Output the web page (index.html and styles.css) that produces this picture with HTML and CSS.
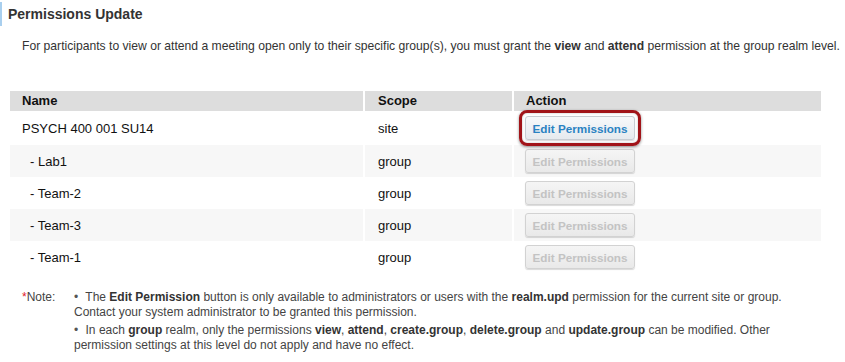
FILE: index.html
```html
<!DOCTYPE html>
<html>
<head>
<meta charset="utf-8">
<link rel="stylesheet" href="styles.css">
</head>
<body>
<div class="page">
  <h2 class="title">Permissions Update</h2>
  <p class="intro">For participants to view or attend a meeting open only to their specific group(s), you must grant the <b>view</b> and <b>attend</b> permission at the group realm level.</p>
  <table class="perm">
    <thead>
      <tr><th class="c-name">Name</th><th class="c-scope">Scope</th><th class="c-action">Action</th></tr>
    </thead>
    <tbody>
      <tr><td>PSYCH 400 001 SU14</td><td>site</td><td><span class="hl"><button class="btn active">Edit Permissions</button></span></td></tr>
      <tr class="alt"><td class="sub">- Lab1</td><td>group</td><td><button class="btn" disabled>Edit Permissions</button></td></tr>
      <tr><td class="sub">- Team-2</td><td>group</td><td><button class="btn" disabled>Edit Permissions</button></td></tr>
      <tr class="alt"><td class="sub">- Team-3</td><td>group</td><td><button class="btn" disabled>Edit Permissions</button></td></tr>
      <tr><td class="sub">- Team-1</td><td>group</td><td><button class="btn" disabled>Edit Permissions</button></td></tr>
    </tbody>
  </table>
  <div class="note">
    <div class="note-label"><span class="star">*</span>Note:</div>
    <ul class="note-list">
      <li><span class="bullet">•</span> The <b>Edit Permission</b> button is only available to administrators or users with the <b>realm.upd</b> permission for the current site or group. Contact your system administrator to be granted this permission.</li>
      <li><span class="bullet">•</span> In each <b>group</b> realm, only the permissions <b>view</b>, <b>attend</b>, <b>create.group</b>, <b>delete.group</b> and <b>update.group</b> can be modified. Other permission settings at this level do not apply and have no effect.</li>
    </ul>
  </div>
</div>
</body>
</html>
```
FILE: styles.css
```css
html, body {
  margin: 0;
  padding: 0;
  background: #fff;
}
body {
  font-family: "Liberation Sans", Arial, sans-serif;
  color: #333;
}
.page {
  width: 845px;
  height: 362px;
  overflow: hidden;
}
.title {
  margin: 2px 0 0 0;
  height: 24px;
  line-height: 24px;
  font-size: 14px;
  font-weight: bold;
  color: #333;
  padding-left: 6px;
  border-left: 2px solid #a9cfee;
  box-sizing: border-box;
}
.intro {
  margin: 12px 0 0 22px;
  font-size: 12.15px;
  line-height: 16px;
  color: #333;
  white-space: nowrap;
}
.intro b { color: #333; }
.perm {
  margin: 37px 0 0 8px;
  width: 815px;
  border-collapse: separate;
  border-spacing: 2px 0;
  font-size: 13px;
  color: #111;
}
.perm th {
  background: #ddd;
  text-align: left;
  font-weight: bold;
  height: 20px;
  padding: 0 0 0 12px;
  line-height: 20px;
  color: #111;
}
.c-name { width: 341px; }
.c-scope { width: 134px; padding-left: 13px !important; }
.perm td {
  height: 32px;
  padding: 0 0 0 12px;
  vertical-align: middle;
}
.perm td:nth-child(2) { padding-left: 13px; }
.perm td:nth-child(3) { padding-left: 11px; }
.perm tbody tr:first-child td { height: 34px; }
.perm tr.alt td { background: #f7f7f7; }
.perm td.sub { padding-left: 20px; }
.btn {
  font-family: "Liberation Sans", Arial, sans-serif;
  font-size: 11.7px;
  font-weight: bold;
  width: 110px;
  height: 24px;
  padding: 0;
  border: 1px solid #d2d2d2;
  border-radius: 3px;
  background: linear-gradient(#f5f5f5, #e9e9e9);
  color: #c3c3c3;
  box-shadow: 0 1px 1px rgba(0,0,0,0.15);
  display: block;
}
.btn.active {
  color: #2a82c2;
  background: linear-gradient(#f7f9fb, #e6eaee);
  border-color: #c8cdd3;
}
.hl {
  position: relative;
  display: inline-block;
  vertical-align: middle;
}
.hl::after {
  content: "";
  position: absolute;
  left: -6px;
  right: -6px;
  top: -6px;
  bottom: -6px;
  border: 3px solid #a11419;
  border-radius: 8px;
  box-shadow: 0 1px 3px rgba(0,0,0,0.45), inset 0 0 2px rgba(0,0,0,0.3);
}
.note {
  display: flex;
  margin-top: 17px;
  font-size: 12px;
  line-height: 15px;
  color: #444;
}
.note b { color: #333; }
.note-label {
  width: 52px;
  padding-left: 22px;
  flex: none;
  box-sizing: content-box;
}
.star { color: #e0202a; }
.note-list {
  list-style: none;
  margin: 0;
  padding: 0;
  width: 740px;
}
.note-list li {
  margin-bottom: 3px;
}
.bullet {
  color: #555;
  margin-right: 4px;
}
```
